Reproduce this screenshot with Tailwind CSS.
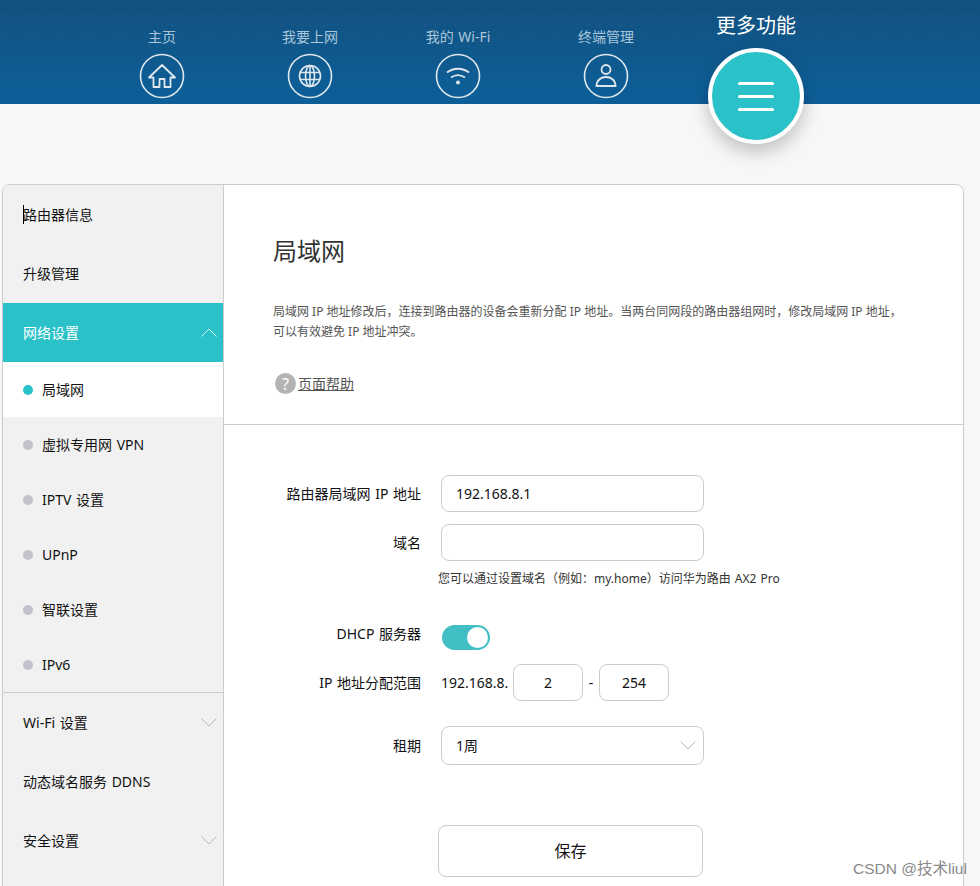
<!DOCTYPE html>
<html lang="zh-CN">
  <head>
    <meta charset="UTF-8" />
    <meta name="viewport" content="width=device-width, initial-scale=1.0" />
    <script src="https://cdn.jsdelivr.net/npm/@tailwindcss/browser@4"></script>
    <title>局域网</title>
  </head>

  <body class="relative h-[886px] w-[980px] overflow-hidden bg-[#f7f7f7] font-['Noto_Sans','Noto_Sans_CJK_SC',sans-serif] text-[14px] text-[#111111] [word-spacing:1px]">
    <!-- top nav -->
    <header class="h-[104px] bg-[#12507f] bg-[linear-gradient(to_bottom,rgba(13,94,150,0),rgba(13,94,150,1)_85%),radial-gradient(ellipse_5px_2px,rgba(255,255,255,0.025),transparent),linear-gradient(#12507f,#12507f)] bg-[size:100%_100%,11px_10px,100%_100%] pl-[88px] pt-[27px]">
      <nav class="flex text-[#a9c6da]">
        <a class="flex w-[148px] flex-col items-center">
          <span class="h-[20px] leading-[20px]">主页</span>
          <svg class="mt-[6px]" width="46" height="46" viewBox="0 0 46 46" fill="none" stroke="#dfe8ef" stroke-width="1.6">
            <circle cx="23" cy="23" r="21.5" />
            <path d="M23 12 10 24.500h4.500V34h6v-8h5v8h6v-9.500H36z" stroke-width="1.800" stroke-linejoin="round" />
          </svg>
        </a>
        <a class="flex w-[148px] flex-col items-center">
          <span class="h-[20px] leading-[20px]">我要上网</span>
          <svg class="mt-[6px]" width="46" height="46" viewBox="0 0 46 46" fill="none" stroke="#dfe8ef" stroke-width="1.6">
            <circle cx="23" cy="23" r="21.5" />
            <circle cx="23" cy="23" r="10.500" />
            <ellipse cx="23" cy="23" rx="4.500" ry="10.500" />
            <path d="M23 12.500v21M13.200 19.500h19.600M13.200 26.500h19.600" />
          </svg>
        </a>
        <a class="flex w-[148px] flex-col items-center">
          <span class="h-[20px] leading-[20px]">我的 Wi-Fi</span>
          <svg class="mt-[6px]" width="46" height="46" viewBox="0 0 46 46" fill="none" stroke="#dfe8ef" stroke-width="1.6">
            <circle cx="23" cy="23" r="21.5" />
            <path d="M12 19.500c6.500-5 15.500-5 22 0M16 24.500c4.300-3 9.700-3 14 0" stroke-width="1.800" />
            <circle cx="23" cy="29.500" r="2" fill="#dfe8ef" stroke="none" />
          </svg>
        </a>
        <a class="flex w-[148px] flex-col items-center">
          <span class="h-[20px] leading-[20px]">终端管理</span>
          <svg class="mt-[6px]" width="46" height="46" viewBox="0 0 46 46" fill="none" stroke="#dfe8ef" stroke-width="1.6">
            <circle cx="23" cy="23" r="21.5" />
            <circle cx="23" cy="16.500" r="4.500" stroke-width="1.800" />
            <path d="M13.500 33c0-12 19-12 19 0z" stroke-width="1.800" />
          </svg>
        </a>
      </nav>
    </header>

    <!-- active nav item sits over the header edge -->
    <div class="absolute left-[696px] top-[12px] flex w-[120px] flex-col items-center text-white">
      <span class="h-[28px] text-[20px] leading-[28px]">更多功能</span>
      <div class="mt-[8px] flex h-[96px] w-[96px] flex-col items-center justify-center gap-[10px] rounded-full border-[4px] border-white bg-[#2ac1c8] shadow-[0_8px_18px_rgba(0,0,0,0.22)]">
        <i class="block h-[3px] w-[36px] rounded-full bg-white"></i>
        <i class="block h-[3px] w-[36px] rounded-full bg-white"></i>
        <i class="block h-[3px] w-[36px] rounded-full bg-white"></i>
      </div>
    </div>

    <!-- card -->
    <div class="ml-[2px] mt-[80px] flex h-[720px] w-[962px] overflow-hidden rounded-t-[8px] border border-[#cccccc] bg-white">
      <aside class="relative w-[221px] shrink-0 border-r border-[#cccccc] bg-[#f1f1f1]">
        <i class="absolute left-[20px] top-[20px] block h-[19px] w-px bg-black"></i>
        <div class="flex h-[59px] items-center pl-[20px]">路由器信息</div>
        <div class="flex h-[59px] items-center pl-[20px]">升级管理</div>
        <div class="flex h-[59px] items-center justify-between bg-[#2ac1c8] pl-[20px] pr-[6px] text-white">
          网络设置
          <svg width="16" height="9" viewBox="0 0 16 9" fill="none" stroke="#d5f2f3"><path d="M.5 8.500 8 1l7.500 7.500" /></svg>
        </div>
        <div class="flex h-[55px] items-center gap-[9px] bg-white pl-[20px]">
          <i class="block h-[10px] w-[10px] rounded-full bg-[#2ac1c8]"></i>局域网
        </div>
        <div class="flex h-[55px] items-center gap-[9px] pl-[20px]">
          <i class="block h-[10px] w-[10px] rounded-full bg-[#c2c2cc]"></i>虚拟专用网 VPN
        </div>
        <div class="flex h-[55px] items-center gap-[9px] pl-[20px]">
          <i class="block h-[10px] w-[10px] rounded-full bg-[#c2c2cc]"></i>IPTV 设置
        </div>
        <div class="flex h-[55px] items-center gap-[9px] pl-[20px]">
          <i class="block h-[10px] w-[10px] rounded-full bg-[#c2c2cc]"></i>UPnP
        </div>
        <div class="flex h-[55px] items-center gap-[9px] pl-[20px]">
          <i class="block h-[10px] w-[10px] rounded-full bg-[#c2c2cc]"></i>智联设置
        </div>
        <div class="flex h-[56px] items-center gap-[9px] border-b border-[#cccccc] pl-[20px]">
          <i class="block h-[10px] w-[10px] rounded-full bg-[#c2c2cc]"></i>IPv6
        </div>
        <div class="flex h-[59px] items-center justify-between pl-[20px] pr-[6px]">
          Wi-Fi 设置
          <svg width="16" height="9" viewBox="0 0 16 9" fill="none" stroke="#b8b8b8"><path d="M.5.500 8 8l7.500-7.500" /></svg>
        </div>
        <div class="flex h-[59px] items-center pl-[20px]">动态域名服务 DDNS</div>
        <div class="flex h-[59px] items-center justify-between pl-[20px] pr-[6px]">
          安全设置
          <svg width="16" height="9" viewBox="0 0 16 9" fill="none" stroke="#b8b8b8"><path d="M.5.500 8 8l7.500-7.500" /></svg>
        </div>
      </aside>

      <main class="flex-1">
        <section class="h-[240px] border-b border-[#cccccc] pl-[49px] pr-[60px] pt-[48px]">
          <h1 class="text-[24px] leading-[36px] text-[#333333]">局域网</h1>
          <p class="mt-[33px] text-[12px] leading-[20px] text-[#555555] [word-spacing:0]">局域网 IP 地址修改后，连接到路由器的设备会重新分配 IP 地址。当两台同网段的路由器组网时，修改局域网 IP 地址，可以有效避免 IP 地址冲突。</p>
          <a class="ml-[2px] mt-[31px] flex items-center gap-[2px] text-[#555555]">
            <span class="flex h-[21px] w-[21px] items-center justify-center rounded-full bg-[#b3b3b3] text-[16px] text-white">?</span>
            <span class="underline">页面帮助</span>
          </a>
        </section>

        <form class="pt-[50px]">
          <div class="flex h-[37px] items-center">
            <label class="w-[197px] text-right">路由器局域网 IP 地址</label>
            <div class="ml-[20px] flex h-[37px] w-[263px] items-center rounded-[8px] border border-[#cccccc] pl-[14px]">192.168.8.1</div>
          </div>
          <div class="mt-[12px] flex h-[37px] items-center">
            <label class="w-[197px] text-right">域名</label>
            <div class="ml-[20px] h-[37px] w-[263px] rounded-[8px] border border-[#cccccc]"></div>
          </div>
          <p class="ml-[214px] mt-[9px] text-[12px] leading-[18px] text-[#333333]">您可以通过设置域名（例如：my.home）访问华为路由 AX2 Pro</p>
          <div class="mt-[37px] flex h-[25px] items-center">
            <label class="mb-[8px] w-[197px] text-right">DHCP 服务器</label>
            <div class="ml-[21px] flex h-[25px] w-[48px] items-center justify-end rounded-full bg-[#41bfc5] pr-[2px]">
              <i class="block h-[21px] w-[21px] rounded-full bg-white"></i>
            </div>
          </div>
          <div class="mt-[14px] flex h-[37px] items-center">
            <label class="w-[197px] text-right">IP 地址分配范围</label>
            <span class="ml-[20px] w-[72px]">192.168.8.</span>
            <div class="flex h-[37px] w-[70px] items-center justify-center rounded-[8px] border border-[#cccccc]">2</div>
            <span class="w-[16px] text-center">-</span>
            <div class="flex h-[37px] w-[70px] items-center justify-center rounded-[8px] border border-[#cccccc]">254</div>
          </div>
          <div class="mt-[25px] flex h-[39px] items-center">
            <label class="w-[197px] text-right">租期</label>
            <div class="ml-[20px] flex h-[39px] w-[263px] items-center justify-between rounded-[8px] border border-[#cccccc] pl-[14px] pr-[7px]">
              1周
              <svg width="16" height="9" viewBox="0 0 16 9" fill="none" stroke="#b8b8b8"><path d="M.5.500 8 8l7.500-7.500" /></svg>
            </div>
          </div>
          <button type="button" class="ml-[214px] mt-[60px] h-[52px] w-[265px] rounded-[8px] border border-[#cccccc] text-[16px]">保存</button>
        </form>
      </main>
    </div>

    <!-- watermark -->
    <span class="absolute left-[853px] top-[858px] font-['Liberation_Sans','Noto_Sans_CJK_SC',sans-serif] text-[15.5px] leading-[22px] text-[#8a8a8a] [word-spacing:0]">CSDN @技术liul</span>
  </body>
</html>
